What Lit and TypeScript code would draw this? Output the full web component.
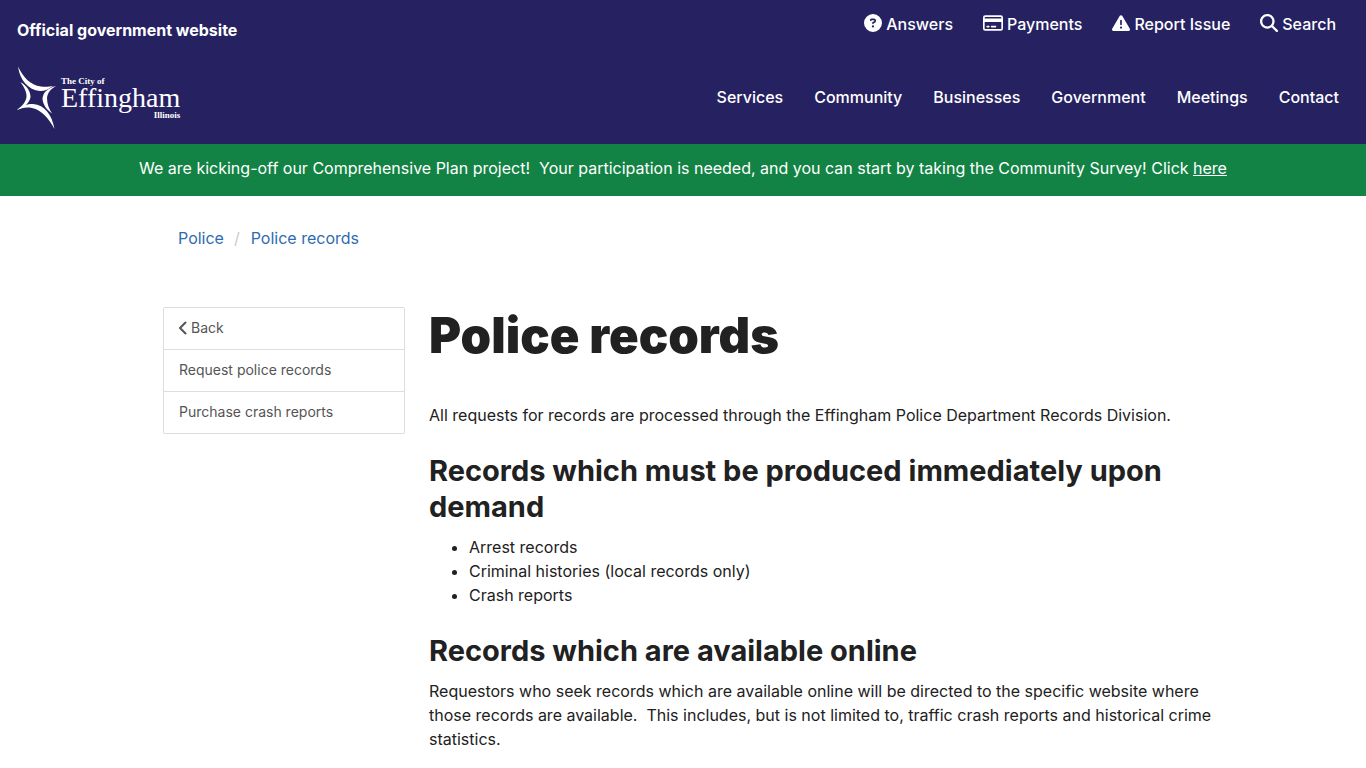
import { LitElement, html, css, svg } from "lit";
import { customElement } from "lit/decorators.js";

const icons = {
  question: svg`<path d="M256 512A256 256 0 1 0 256 0a256 256 0 1 0 0 512zM169.8 165.3c7.9-22.3 29.1-37.3 52.8-37.3h58.3c34.9 0 63.1 28.3 63.1 63.1c0 22.6-12.1 43.5-31.7 54.8L280 264.4c-.2 13-10.9 23.6-24 23.6c-13.3 0-24-10.7-24-24V250.5c0-8.6 4.6-16.5 12.1-20.8l44.3-25.4c4.7-2.7 7.6-7.7 7.6-13.1c0-8.4-6.8-15.1-15.1-15.1H222.6c-3.4 0-6.4 2.1-7.5 5.3l-.4 1.2c-4.4 12.5-18.2 19-30.6 14.6s-19-18.2-14.6-30.6l.4-1.2zM224 352a32 32 0 1 1 64 0 32 32 0 1 1 -64 0z"/>`,
  card: svg`<path fill-rule="evenodd" d="M64 32H512a64 64 0 0 1 64 64V416a64 64 0 0 1-64 64H64a64 64 0 0 1-64-64V96A64 64 0 0 1 64 32zM64 80a16 16 0 0 0-16 16v32H528V96a16 16 0 0 0-16-16zM48 224V416a16 16 0 0 0 16 16H512a16 16 0 0 0 16-16V224zM120 336h48a24 24 0 0 1 0 48h-48a24 24 0 0 1 0-48zM248 336h112a24 24 0 0 1 0 48H248a24 24 0 0 1 0-48z"/>`,
  warning: svg`<path d="M256 32c14.2 0 27.3 7.5 34.5 19.8l216 368c7.3 12.4 7.3 27.7 .2 40.1S486.3 480 472 480H40c-14.3 0-27.6-7.7-34.7-20.1s-7-27.8 .2-40.1l216-368C228.7 39.5 241.8 32 256 32zm0 128c-13.3 0-24 10.7-24 24V296c0 13.3 10.7 24 24 24s24-10.7 24-24V184c0-13.3-10.7-24-24-24zm32 224a32 32 0 1 0 -64 0 32 32 0 1 0 64 0z"/>`,
  search: svg`<path d="M416 208c0 45.9-14.9 88.3-40 122.7L502.6 457.4c12.5 12.5 12.5 32.8 0 45.3s-32.8 12.5-45.3 0L330.7 376c-34.4 25.2-76.8 40-122.7 40C93.1 416 0 322.9 0 208S93.1 0 208 0S416 93.1 416 208zM208 352a144 144 0 1 0 0-288 144 144 0 1 0 0 288z"/>`,
};

const quickLinks = [
  { label: "Answers", icon: icons.question, box: "0 0 512 512" },
  { label: "Payments", icon: icons.card, box: "0 0 576 512", wide: true },
  { label: "Report Issue", icon: icons.warning, box: "0 0 512 512" },
  { label: "Search", icon: icons.search, box: "0 0 512 512" },
];

const sections = ["Services", "Community", "Businesses", "Government", "Meetings", "Contact"];

@customElement("site-header")
class SiteHeader extends LitElement {
  static styles = css`
    :host { display: block; background: #262262; color: #fff; font-weight: 500; }
    a { color: inherit; text-decoration: none; }
    .row { display: flex; justify-content: space-between; }
    .top { padding: 12px 30px 0 17px; }
    .official { font-weight: 700; line-height: 24px; padding-top: 6px; }
    .quick { display: flex; align-items: flex-start; gap: 30px; line-height: 24px; }
    .quick a { display: flex; align-items: center; gap: 4px; }
    .icon { width: 18px; height: 18px; fill: currentColor; margin-top: -2px; }
    .icon.wide { width: 20px; }
    .main { align-items: center; padding: 22px 27px 14px 16px; }
    .nav { display: flex; gap: 31px; line-height: 24px; }
    .logo { display: flex; align-items: center; gap: 4px; height: 66px; }
    .star { width: 41px; height: 66px; fill: currentColor; }
    .name { display: grid; font-family: "Liberation Serif", serif; font-weight: 400; padding-top: 2px; }
    .small { font-size: 9px; line-height: 10px; font-weight: 700; }
    .big { font-size: 28px; line-height: 24px; }
    .end { text-align: right; }
  `;

  render() {
    return html`
      <header>
        <div class="row top">
          <div class="official">Official government website</div>
          <nav class="quick" aria-label="Quick links">
            ${quickLinks.map(
              (l) => html`<a href="#"><svg class="icon ${l.wide ? "wide" : ""}" viewBox=${l.box} aria-hidden="true">${l.icon}</svg>${l.label}</a>`
            )}
          </nav>
        </div>
        <div class="row main">
          <a class="logo" href="#">
            <svg class="star" viewBox="0 0 41 66" aria-hidden="true">
              <path d="M2 2.500C7 13 14 21 25 22.500C30 23 34 22.500 37 22C33 25 29 27 24 27C12 26 4 16 2 2.500Z"/>
              <path d="M4.500 18C11 22 14.500 27 14.500 33C13.500 39 8 44 1 46C6 42 10 38 10.500 33C11 28 8 23 4.500 18Z"/>
              <path d="M1 46C6 41.500 11 40 17 40C29 41 36 51 38.500 65C33 55 26 46 16 44C10 43 5 44 1 46Z"/>
              <path d="M40 22C34.500 25 31.500 29 31 34C31 40 33 45 36 49.500C31 46 27 41 26.500 35C27 28 32 24 40 22Z"/>
            </svg>
            <span class="name">
              <span class="small">The City of</span>
              <span class="big">Effingham</span>
              <span class="small end">Illinois</span>
            </span>
          </a>
          <nav class="nav" aria-label="Main">
            ${sections.map((s) => html`<a href="#">${s}</a>`)}
          </nav>
        </div>
      </header>
    `;
  }
}

@customElement("side-menu")
class SideMenu extends LitElement {
  static styles = css`
    :host { display: block; font-size: 14px; line-height: 20px; }
    .list { list-style: none; margin: 0; padding: 0; border: 1px solid #ddd; border-radius: 2px; }
    .item + .item { border-top: 1px solid #ddd; }
    .link { display: flex; align-items: center; gap: 4px; padding: 10px 15px 11px; color: #555; text-decoration: none; }
    .chevron { width: 8px; height: 14px; fill: none; stroke: currentColor; stroke-width: 2; stroke-linecap: round; stroke-linejoin: round; }
  `;

  render() {
    return html`
      <nav aria-label="Section">
        <ul class="list">
          <li class="item">
            <a class="link" href="#"><svg class="chevron" viewBox="0 0 8 14" aria-hidden="true"><path d="M6.500 1.500L1 7L6.500 12.500"/></svg>Back</a>
          </li>
          <li class="item"><a class="link" href="#">Request police records</a></li>
          <li class="item"><a class="link" href="#">Purchase crash reports</a></li>
        </ul>
      </nav>
    `;
  }
}

@customElement("app-root")
class AppRoot extends LitElement {
  static styles = css`
    :host { display: block; font-family: Inter, "Open Sans", sans-serif; font-size: 16px; line-height: 24px; color: #212121; background: #fff; }
    .alert { background: #128344; color: #fff; font-weight: 400; text-align: center; padding: 12px 16px 16px; }
    .alert a { color: inherit; }
    .container { max-width: 1040px; margin: 0 auto; padding: 0 16px; }
    .crumbs { display: flex; list-style: none; margin: 0; padding: 30px 15px 57px; }
    .crumbs a { color: #2e6bb0; text-decoration: none; }
    .crumb + .crumb::before { content: "/"; color: #ccc; padding: 0 11px 0 10px; }
    .grid { display: grid; grid-template-columns: repeat(12, minmax(0, 1fr)); column-gap: 24px; align-items: start; }
    .side { grid-column: span 3; }
    .content { grid-column: span 9; margin-right: -16px; }
    h1 { font-size: 49px; line-height: 58px; font-weight: 900; margin: 0 0 38px; }
    h2 { font-size: 29px; line-height: 36px; font-weight: 700; margin: 26px 0 10px; }
    p, ul { margin: 0; }
    ul { padding-left: 40px; }
  `;

  render() {
    return html`
      <site-header></site-header>
      <div class="alert" role="status">
        We are kicking-off our Comprehensive Plan project!&nbsp; Your participation is needed, and you can start by taking the Community Survey! Click <a href="#">here</a>
      </div>
      <div class="container">
        <nav aria-label="Breadcrumb">
          <ol class="crumbs">
            <li class="crumb"><a href="#">Police</a></li>
            <li class="crumb"><a href="#">Police records</a></li>
          </ol>
        </nav>
        <div class="grid">
          <side-menu class="side"></side-menu>
          <main class="content">
            <h1>Police records</h1>
            <p>All requests for records are processed through the Effingham Police Department Records Division.</p>
            <h2>Records which must be produced immediately upon demand</h2>
            <ul>
              <li>Arrest records</li>
              <li>Criminal histories (local records only)</li>
              <li>Crash reports</li>
            </ul>
            <h2>Records which are available online</h2>
            <p>Requestors who seek records which are available online will be directed to the specific website where those records are available.&nbsp; This includes, but is not limited to, traffic crash reports and historical crime statistics.</p>
          </main>
        </div>
      </div>
    `;
  }
}
